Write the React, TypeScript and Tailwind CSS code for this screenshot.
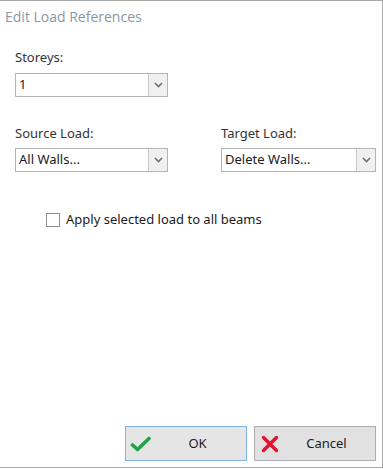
import React from "react";

function ComboBox({ value, className }: { value: string; className?: string }) {
  return (
    <div className={`flex h-[24px] border border-[#b4b4b4] bg-white ${className ?? ""}`}>
      <div className="flex flex-1 items-center pl-[3px] text-[13px] text-[#1b1b1b]">{value}</div>
      <div className="flex w-[19px] items-center justify-center border-l border-[#c8c8c8] bg-[#f0f0f0]">
        <svg width="9" height="6" viewBox="0 0 9 6">
          <path d="M1 1 L4.5 4.5 L8 1" fill="none" stroke="#707070" strokeWidth="1.6" />
        </svg>
      </div>
    </div>
  );
}

function DialogButton({
  label,
  icon,
  focused,
}: {
  label: string;
  icon: React.ReactNode;
  focused?: boolean;
}) {
  return (
    <button
      type="button"
      className={`flex h-[35px] w-[122px] items-center border ${
        focused ? "border-[#7eb4ea] bg-[#e5e5e5]" : "border-[#adadad] bg-[#e1e1e1]"
      }`}
    >
      <span className="flex w-[30px] justify-center">{icon}</span>
      <span className="flex-1 pr-[7px] text-center text-[13px] text-[#1b1b1b]">{label}</span>
    </button>
  );
}

export default function App() {
  return (
    <div
      className="flex h-[468px] w-[383px] flex-col border-t border-r border-b border-[#a8a8a8] bg-white"
      style={{ fontFamily: "'Noto Sans', 'Open Sans', sans-serif" }}
    >
      <div
        className="h-[34px] pl-[5px] pt-[5px] text-[14px] text-[#8a98a6]"
        style={{ fontFamily: "'Open Sans', 'Noto Sans', sans-serif" }}
      >
        Edit Load References
      </div>

      <div className="flex flex-col px-[15px] pt-[15px]">
        <div className="h-[15px] text-[13px] leading-[15px] text-[#333]">Storeys:</div>
        <ComboBox value="1" className="mt-[8px] w-[153px]" />

        <div className="mt-[29px] flex gap-[53px]">
          <div className="flex flex-col">
            <div className="h-[15px] text-[13px] leading-[15px] text-[#333]">Source Load:</div>
            <ComboBox value="All Walls..." className="mt-[7px] w-[153px]" />
          </div>
          <div className="flex flex-col">
            <div className="h-[15px] text-[13px] leading-[15px] text-[#333]">Target Load:</div>
            <ComboBox value="Delete Walls..." className="mt-[7px] w-[155px]" />
          </div>
        </div>

        <label className="ml-[31px] mt-[38px] flex items-center gap-[6px]">
          <span className="h-[14px] w-[14px] border border-[#8f8f8f] bg-white" />
          <span className="text-[13px] text-[#1b1b1b]">Apply selected load to all beams</span>
        </label>
      </div>

      <div className="mt-auto flex justify-end gap-[7px] pb-[6px] pr-[6px]">
        <DialogButton
          label="OK"
          focused
          icon={
            <svg width="22" height="16" viewBox="0 0 22 16">
              <path
                d="M2.5 9 L7.5 13.5 L19 2.5"
                fill="none"
                stroke="#22a34a"
                strokeWidth="3.6"
                strokeLinecap="round"
                strokeLinejoin="round"
              />
            </svg>
          }
        />
        <DialogButton
          label="Cancel"
          icon={
            <svg width="18" height="18" viewBox="0 0 18 18">
              <path
                d="M2.5 2.5 L15.5 15.5 M15.5 2.5 L2.5 15.5"
                fill="none"
                stroke="#e5112e"
                strokeWidth="3.4"
                strokeLinecap="round"
              />
            </svg>
          }
        />
      </div>
    </div>
  );
}
